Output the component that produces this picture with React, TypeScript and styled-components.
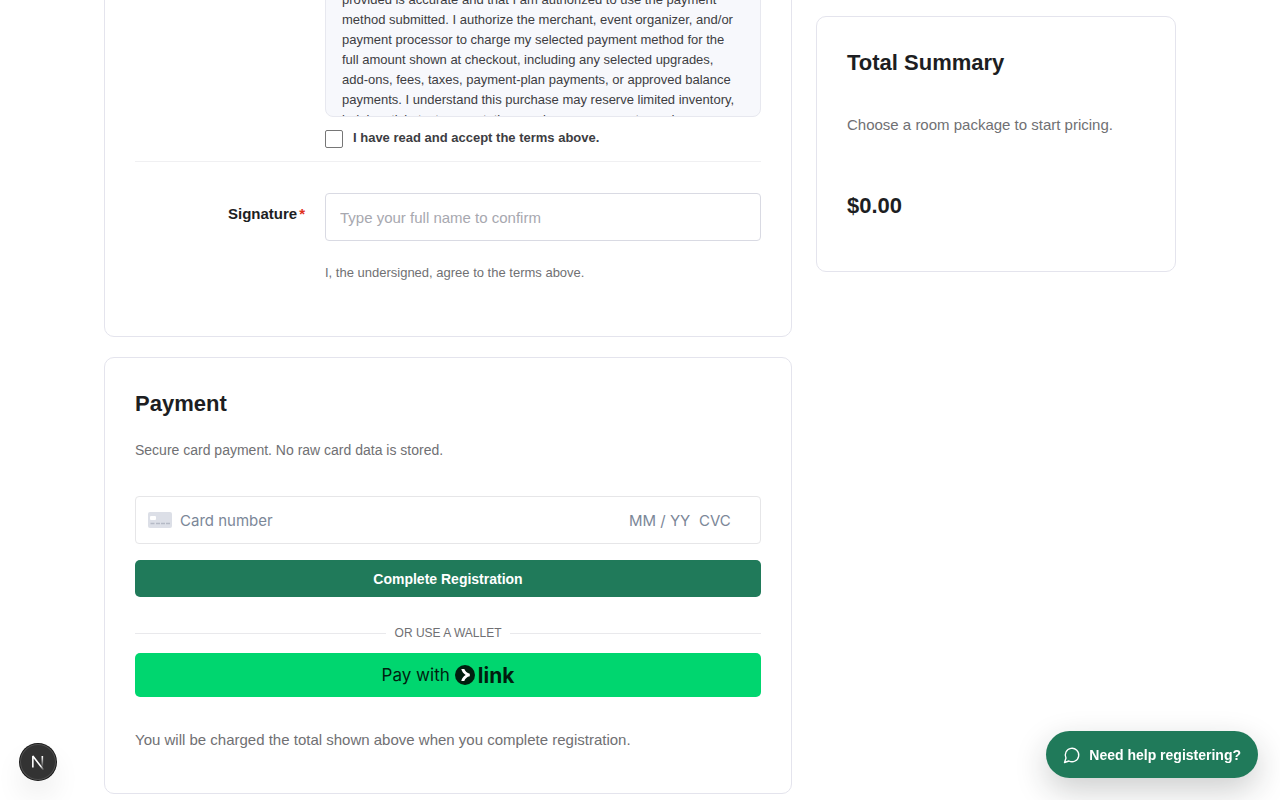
import React from "react";
import styled, { createGlobalStyle } from "styled-components";

const GlobalStyle = createGlobalStyle`
  *, *::before, *::after { box-sizing: border-box; }
  body {
    margin: 0;
    background: #fff;
    color: #1d1e22;
    font-family: "Liberation Sans", Arial, sans-serif;
    font-size: 15px;
    line-height: 24px;
  }
  h2, p { margin: 0; }
  button, input { font-family: inherit; }
`;

const Page = styled.div`
  height: 100vh;
  overflow: hidden;
`;

const Columns = styled.div`
  display: grid;
  grid-template-columns: minmax(0, 1fr) 360px;
  align-items: start;
  gap: 24px;
  max-width: 1072px;
  margin: 0 auto;
`;

const Form = styled.form`
  display: flex;
  flex-direction: column;
  gap: 20px;
`;

const Card = styled.section`
  padding: 30px;
  border: 1px solid #e4e4ed;
  border-radius: 10px;
  background: #fff;
`;

const AgreementCard = styled(Card)`
  margin-top: -32px;
  padding-top: 0;
  padding-bottom: 51px;
`;

const PaymentCard = styled(Card)`
  padding-bottom: 41px;
`;

const SummaryCard = styled(Card)`
  margin-top: 16px;
  padding-bottom: 49px;
`;

const Heading = styled.h2`
  font-size: 22px;
  line-height: 32px;
  font-weight: 700;
`;

const Note = styled.p<{ $size?: number; $top?: number }>`
  margin-top: ${({ $top = 0 }) => $top}px;
  font-size: ${({ $size = 15 }) => $size}px;
  line-height: 24px;
  color: #707073;
`;

const Price = styled.p`
  margin-top: 53px;
  font-size: 22px;
  line-height: 32px;
  font-weight: 700;
`;

const FieldRow = styled.div<{ $ruled?: boolean }>`
  display: grid;
  grid-template-columns: 170px minmax(0, 1fr);
  column-gap: 20px;
  padding-bottom: ${({ $ruled }) => ($ruled ? 13 : 0)}px;
  border-bottom: ${({ $ruled }) => ($ruled ? "1px solid #f0f0f2" : "0")};
`;

const FieldBody = styled.div`
  grid-column: 2;
`;

const FieldLabel = styled.label`
  padding-top: 9px;
  text-align: right;
  font-weight: 700;
`;

const Required = styled.span`
  margin-left: 2px;
  color: #e0301e;
`;

const Terms = styled.div`
  height: 148px;
  padding: 20px 20px 0 16px;
  border: 1px solid #e7e8ef;
  border-radius: 8px;
  background: #f7f8fc;
  overflow: hidden;
  color: #3d3d42;
  font-size: 13px;
  line-height: 20px;
`;

const Accept = styled.label`
  display: flex;
  gap: 10px;
  margin-top: 13px;
  font-size: 13px;
  line-height: 16px;
  font-weight: 700;
  color: #3d3d42;
`;

const Tick = styled.input`
  appearance: none;
  width: 18px;
  height: 18px;
  margin: 0;
  border: 1px solid #767676;
  border-radius: 2px;
  background: #fff;
`;

const TextBox = styled.input`
  display: block;
  width: 100%;
  height: 48px;
  padding: 0 14px;
  border: 1px solid #d9dae3;
  border-radius: 4px;
  background: #fff;
  font-size: 15px;
  &::placeholder { color: #a7a8af; opacity: 1; }
`;

const SignatureRow = styled(FieldRow)`
  margin-top: 31px;
`;

const CardBox = styled.div`
  display: flex;
  align-items: center;
  height: 48px;
  margin-top: 34px;
  padding: 0 12px;
  border: 1px solid #e6e6e8;
  border-radius: 4px;
`;

const CardInput = styled.input<{ $width?: number }>`
  flex: ${({ $width }) => ($width ? `0 0 ${$width}px` : "1 1 0")};
  min-width: 0;
  height: 24px;
  padding: 0;
  border: 0;
  background: none;
  font-family: Inter, sans-serif;
  font-size: 15px;
  &::placeholder { color: #7b8798; opacity: 1; }
`;

const CardIcon = styled.svg`
  margin-right: 8px;
`;

const Submit = styled.button`
  display: block;
  width: 100%;
  height: 37px;
  margin-top: 16px;
  border: 0;
  border-radius: 5px;
  background: #207a5a;
  color: #fff;
  font-size: 14px;
  font-weight: 700;
`;

const Divider = styled.div`
  display: flex;
  align-items: center;
  gap: 9px;
  margin: 24px 0 8px;
  font-size: 12px;
  line-height: 24px;
  color: #707073;
  &::before, &::after {
    content: "";
    flex: 1;
    height: 1px;
    background: #e9e9ec;
  }
`;

const LinkPay = styled.button`
  display: flex;
  align-items: center;
  justify-content: center;
  width: 100%;
  height: 44px;
  padding: 0;
  border: 0;
  border-radius: 5px;
  background: #00d66f;
  color: #011e0f;
  font-family: Inter, sans-serif;
  font-size: 17px;
`;

const LinkMark = styled.svg`
  margin: 0 3px 0 5px;
`;

const LinkWord = styled.span`
  font-size: 21px;
  font-weight: 700;
`;

const DevBadge = styled.button`
  position: fixed;
  left: 20px;
  bottom: 20px;
  display: grid;
  place-items: center;
  width: 36px;
  height: 36px;
  padding: 0;
  border: 0;
  border-radius: 50%;
  background: #333;
  box-shadow: 0 0 0 1px #171717, inset 0 0 0 1px rgba(255, 255, 255, 0.14),
    0 16px 32px -8px rgba(0, 0, 0, 0.24);
`;

const HelpButton = styled.button`
  position: fixed;
  right: 22px;
  bottom: 22px;
  display: flex;
  align-items: center;
  gap: 8px;
  height: 47px;
  padding: 0 17px;
  border: 0;
  border-radius: 24px;
  background: #207a5a;
  color: #fff;
  font-size: 14px;
  font-weight: 700;
  box-shadow: 0 12px 32px rgba(29, 30, 34, 0.22);
`;

export default function App() {
  return (
    <Page>
      <GlobalStyle />
      <Columns>
        <Form onSubmit={(e) => e.preventDefault()}>
          <AgreementCard>
            <FieldRow $ruled>
              <FieldBody>
                <Terms>
                  provided is accurate and that I am authorized to use the payment
                  method submitted. I authorize the merchant, event organizer, and/or
                  payment processor to charge my selected payment method for the
                  full amount shown at checkout, including any selected upgrades,
                  add-ons, fees, taxes, payment-plan payments, or approved balance
                  payments. I understand this purchase may reserve limited inventory,
                  lodging, tickets, transportation, package components, and
                </Terms>
                <Accept>
                  <Tick type="checkbox" />
                  I have read and accept the terms above.
                </Accept>
              </FieldBody>
            </FieldRow>
            <SignatureRow>
              <FieldLabel htmlFor="signature">
                Signature<Required>*</Required>
              </FieldLabel>
              <FieldBody>
                <TextBox id="signature" type="text" placeholder="Type your full name to confirm" />
                <Note $size={13} $top={20}>I, the undersigned, agree to the terms above.</Note>
              </FieldBody>
            </SignatureRow>
          </AgreementCard>

          <PaymentCard>
            <Heading>Payment</Heading>
            <Note $size={14} $top={18}>Secure card payment. No raw card data is stored.</Note>
            <CardBox>
              <CardIcon width="24" height="16" viewBox="0 0 24 16" aria-hidden="true">
                <rect width="24" height="16" rx="2" fill="#dcdfe7" />
                <rect x="2" y="4" width="6" height="4" rx="1" fill="#fff" />
                <path d="M2.5 11.5h4M8 11.5h4M13 11.5h4M18 11.5h4" stroke="#b5bac6" strokeWidth="1.4" />
              </CardIcon>
              <CardInput aria-label="Card number" placeholder="Card number" />
              <CardInput $width={70} aria-label="Expiry date" placeholder="MM / YY" />
              <CardInput $width={49} aria-label="CVC" placeholder="CVC" />
            </CardBox>
            <Submit type="submit">Complete Registration</Submit>
            <Divider>OR USE A WALLET</Divider>
            <LinkPay type="button">
              Pay with
              <LinkMark width="20" height="20" viewBox="0 0 20 20" aria-hidden="true">
                <circle cx="10" cy="10" r="10" fill="#011e0f" />
                <path d="M9.3 4.1H6.3C6.9 6.6 8.5 8.7 10.7 10C8.5 11.3 6.9 13.4 6.3 15.9H9.3C10.1 13.7 12.1 11.8 14.8 11.3V8.7C12.1 8.2 10.1 6.3 9.3 4.1Z" fill="#fff" />
              </LinkMark>
              <LinkWord>link</LinkWord>
            </LinkPay>
            <Note $top={31}>You will be charged the total shown above when you complete registration.</Note>
          </PaymentCard>
        </Form>

        <SummaryCard as="aside">
          <Heading>Total Summary</Heading>
          <Note $top={34}>Choose a room package to start pricing.</Note>
          <Price>$0.00</Price>
        </SummaryCard>
      </Columns>

      <DevBadge type="button" aria-label="Open developer tools">
        <svg width="16" height="16" viewBox="-0.5 -1 16 16" fill="none" aria-hidden="true">
          <defs>
            <linearGradient id="slash" gradientUnits="userSpaceOnUse" x1="9.9" y1="11.1" x2="15.4" y2="17.9">
              <stop stopColor="#fff" />
              <stop offset="0.6" stopColor="#fff" stopOpacity="0" />
            </linearGradient>
            <linearGradient id="stem" gradientUnits="userSpaceOnUse" x1="11.8" y1="1.4" x2="11.7" y2="12.6">
              <stop stopColor="#fff" />
              <stop offset="1" stopColor="#fff" stopOpacity="0" />
            </linearGradient>
          </defs>
          <path
            d="M13.3 15.2L2.34 1V12.6"
            stroke="url(#slash)"
            strokeWidth="1.6"
            strokeLinejoin="bevel"
          />
          <path d="M11.825 1V13.1" stroke="url(#stem)" strokeWidth="1.6" />
        </svg>
      </DevBadge>

      <HelpButton type="button">
        <svg
          width="18"
          height="18"
          viewBox="0 0 24 24"
          fill="none"
          stroke="currentColor"
          strokeWidth="1.8"
          strokeLinecap="round"
          strokeLinejoin="round"
          aria-hidden="true"
        >
          <path d="M7.9 20A9 9 0 1 0 4 16.1L2 22Z" />
        </svg>
        Need help registering?
      </HelpButton>
    </Page>
  );
}
